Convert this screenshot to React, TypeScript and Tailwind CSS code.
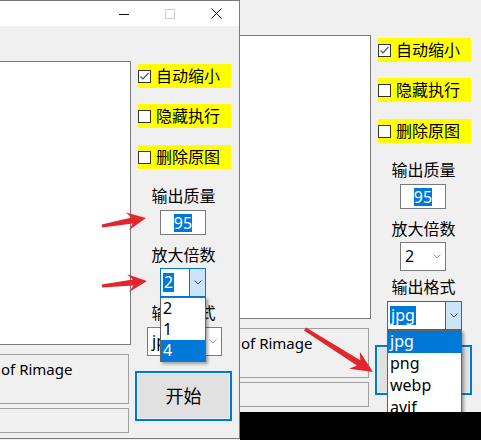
import React from "react";

function arrowPoints(x0: number, y0: number, x1: number, y1: number, head: number, hw: number, tail: number, neckW: number) {
  const dx = x1 - x0;
  const dy = y1 - y0;
  const len = Math.hypot(dx, dy);
  const ux = dx / len;
  const uy = dy / len;
  const nx = -uy;
  const ny = ux;
  const neck = len - head;
  const pt = (t: number, s: number) => `${(x0 + ux * t + nx * s).toFixed(1)},${(y0 + uy * t + ny * s).toFixed(1)}`;
  return [
    pt(0, tail),
    pt(neck + 4, neckW),
    pt(neck - 1, hw),
    pt(len, 0),
    pt(neck - 1, -hw),
    pt(neck + 4, -neckW),
    pt(0, -tail),
  ].join(" ");
}

function Arrows() {
  return (
    <svg className="pointer-events-none absolute left-0 top-0 z-20" width={481} height={440} viewBox="0 0 481 440">
      <polygon points={arrowPoints(102, 226, 146, 218, 18, 9, 1.6, 3)} fill="#e3262b" />
      <polygon points={arrowPoints(102, 286, 147, 281, 18, 9, 1.6, 3)} fill="#e3262b" />
      <polygon points={arrowPoints(305, 329, 373, 372, 21, 10, 1.8, 3.2)} fill="#e3262b" />
    </svg>
  );
}

function Chevron({ color }: { color: string }) {
  return (
    <svg width="8" height="5" viewBox="0 0 8 5">
      <polyline points="0.5,0.5 4,4 7.5,0.5" fill="none" stroke={color} strokeWidth="1" />
    </svg>
  );
}

function CheckBox({ checked }: { checked: boolean }) {
  return (
    <span className="flex h-[13px] w-[13px] shrink-0 items-center justify-center border border-[#333] bg-white">
      {checked ? (
        <svg width="11" height="11" viewBox="0 0 11 11">
          <polyline points="1.5,5.5 4,8 9.5,2" fill="none" stroke="#555" strokeWidth="1.2" />
        </svg>
      ) : null}
    </span>
  );
}

function CheckRow({ label, checked, className }: { label: string; checked: boolean; className: string }) {
  return (
    <div className={`ml-[3px] flex h-[24px] w-[93px] items-center bg-[#ffff00] ${className}`}>
      <CheckBox checked={checked} />
      <span className="ml-[5px] text-[16px] leading-none text-black">{label}</span>
    </div>
  );
}

function FieldLabel({ text, className }: { text: string; className: string }) {
  return <div className={`h-[20px] text-center text-[16px] leading-[20px] text-black ${className}`}>{text}</div>;
}

type ComboProps = {
  value: string;
  focused: boolean;
  width: string;
  className: string;
  options?: string[];
  selected?: string;
  itemHeight?: string;
};

function Combo({ value, focused, width, className, options, selected, itemHeight = "h-[21px]" }: ComboProps) {
  return (
    <div className={`relative ${width} ${className}`}>
      <div className={`flex h-[29px] w-full border bg-white ${focused ? "border-[#0078d7]" : "border-[#7a7a7a]"}`}>
        <div className="flex flex-1 items-center pl-[2px]">
          {focused ? (
            <span className="bg-[#0078d7] px-px text-[16px] leading-[19px] text-white">{value}</span>
          ) : (
            <span className="pl-[2px] text-[16px] leading-[19px] text-black">{value}</span>
          )}
        </div>
        <div
          className={`flex w-[16px] items-center justify-center ${
            focused ? "border-l border-[#0078d7] bg-[#cce4f7]" : ""
          }`}
        >
          <Chevron color={focused ? "#444" : "#999"} />
        </div>
      </div>
      {options ? (
        <div className="absolute left-0 top-full z-10 w-full border border-[#646464] bg-white shadow-[2px_2px_3px_rgba(0,0,0,0.35)]">
          {options.map((o) => (
            <div
              key={o}
              className={`${itemHeight} pl-[2px] text-[16px] leading-[21px] ${
                o === selected ? "bg-[#0078d7] text-white" : "text-black"
              }`}
            >
              {o}
            </div>
          ))}
        </div>
      ) : null}
    </div>
  );
}

function WindowBody({ variant }: { variant: "scale" | "format" }) {
  const scaleOpen = variant === "scale";
  return (
    <div className="flex pt-[35px]">
      <div className="flex w-[131px] shrink-0 flex-col">
        <div className="h-[284px] border border-l-0 border-[#7a7a7a] bg-white" />
        <div className="mt-[9px] h-[50px] w-[129px] border border-l-0 border-[#a0a0a0] pl-px pt-[4px] text-[15px] leading-[20px] text-black">
          of Rimage
        </div>
        <div className="mt-[4px] h-[25px] w-[129px] border border-l-0 border-[#a0a0a0]" />
      </div>

      <div className="ml-[4px] flex w-[97px] shrink-0 flex-col">
        <CheckRow label="自动缩小" checked className="mt-[3px]" />
        <CheckRow label="隐藏执行" checked={false} className="mt-[16px]" />
        <CheckRow label="删除原图" checked={false} className="mt-[17px]" />

        <FieldLabel text="输出质量" className="mt-[17px]" />
        <div className="ml-[25px] mt-[4px] flex h-[25px] w-[46px] items-center justify-center border border-[#7a7a7a] bg-white">
          <span className="bg-[#0078d7] text-[16px] leading-[18px] text-white">95</span>
        </div>

        <FieldLabel text="放大倍数" className="mt-[10px]" />
        <Combo
          value="2"
          focused={scaleOpen}
          width="w-[46px]"
          className="ml-[25px] mt-[3px]"
          options={scaleOpen ? ["2", "1", "4"] : undefined}
          selected="4"
        />

        <FieldLabel text="输出格式" className="mt-[6px]" />
        <Combo
          value="jpg"
          focused={!scaleOpen}
          width="w-[75px]"
          className="ml-[12px] mt-[4px]"
          options={!scaleOpen ? ["jpg", "png", "webp", "avif"] : undefined}
          selected="jpg"
          itemHeight="h-[22px]"
        />

        <button
          type="button"
          className="mt-[15px] flex h-[50px] w-[97px] items-center justify-center border-2 border-[#0078d7] bg-[#e1e1e1] text-[18px] text-black shadow-[inset_0_0_0_1px_#e9f1f8]"
        >
          开始
        </button>
      </div>
    </div>
  );
}

function TitleBar() {
  return (
    <div className="flex h-[25px] justify-end bg-white">
      <div className="flex w-[46px] items-center justify-center">
        <svg width="10" height="10" viewBox="0 0 10 10">
          <line x1="0" y1="5.5" x2="10" y2="5.5" stroke="#111" strokeWidth="1" />
        </svg>
      </div>
      <div className="flex w-[46px] items-center justify-center">
        <svg width="10" height="10" viewBox="0 0 10 10">
          <rect x="0.5" y="0.5" width="9" height="9" fill="none" stroke="#cfcfcf" strokeWidth="1" />
        </svg>
      </div>
      <div className="flex w-[46px] items-center justify-center">
        <svg width="11" height="11" viewBox="0 0 11 11">
          <line x1="0.5" y1="0.5" x2="10.5" y2="10.5" stroke="#111" strokeWidth="1" />
          <line x1="10.5" y1="0.5" x2="0.5" y2="10.5" stroke="#111" strokeWidth="1" />
        </svg>
      </div>
    </div>
  );
}

export default function App() {
  return (
    <div className="relative flex h-[440px] w-[481px] overflow-hidden bg-[#f0f0f0] font-['Segoe_UI','Noto_Sans','Noto_Sans_CJK_SC',sans-serif]">
      <div className="flex h-[439px] w-[240px] shrink-0 flex-col overflow-hidden border-b border-r border-t border-[#7a7a7a] bg-[#f0f0f0]">
        <TitleBar />
        <WindowBody variant="scale" />
      </div>

      <div className="flex w-[241px] shrink-0 flex-col">
        <div className="h-[412px] overflow-hidden bg-[#f0f0f0]">
          <WindowBody variant="format" />
        </div>
        <div className="h-[28px] bg-black" />
      </div>

      <Arrows />
    </div>
  );
}
